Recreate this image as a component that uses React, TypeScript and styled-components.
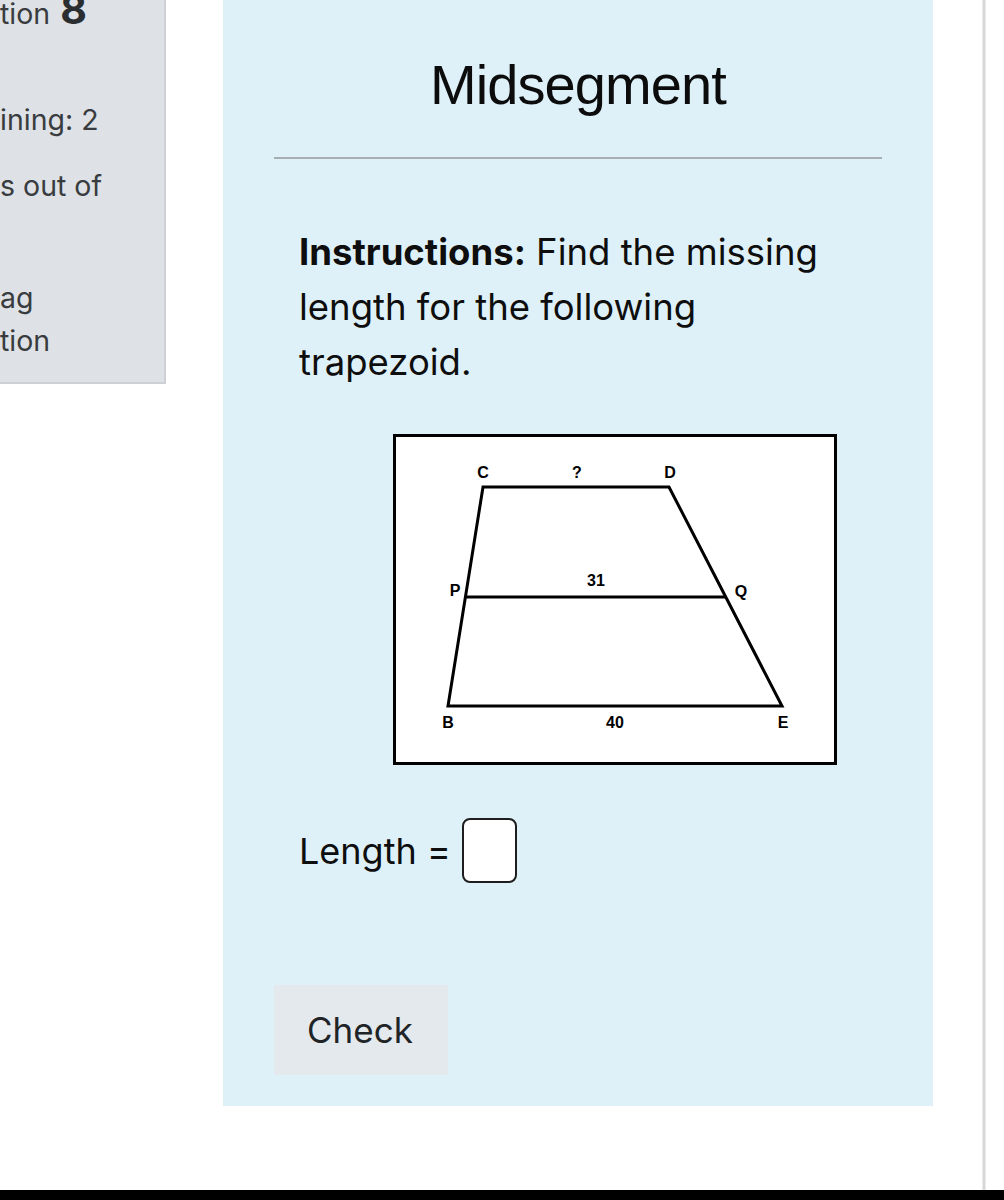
import React from "react";
import styled, { createGlobalStyle } from "styled-components";

const Global = createGlobalStyle`
  html, body { margin: 0; padding: 0; background: #ffffff; }
  body { font-family: Inter, "Noto Sans", sans-serif; }
`;

const Page = styled.div`
  width: 1004px;
  height: 1200px;
  display: flex;
  flex-direction: column;
  overflow: hidden;
`;

const Content = styled.div`
  flex: 1;
  display: flex;
  align-items: flex-start;
`;

const Footer = styled.div`
  height: 10px;
  background: #000;
`;

const Sidebar = styled.aside`
  width: 164px;
  height: 382px;
  background: #dee2e6;
  border-right: 2px solid #cdd1d5;
  border-bottom: 2px solid #cdd1d5;
  overflow: hidden;
  color: #393c3f;
  font-size: 28.5px;
  line-height: 43px;
`;

const SideLine = styled.div<{ $top: number }>`
  margin-top: ${(p) => p.$top}px;
  white-space: nowrap;
`;

const Qno = styled.span`
  font-weight: 700;
  font-size: 41px;
  margin-left: 2px;
  color: #2b2e31;
`;

const Main = styled.main`
  margin-left: 57px;
  width: 710px;
  height: 1106px;
  box-sizing: border-box;
  padding: 50px 51px 30px 51px;
  background: #def1f8;
  color: #111;
  display: flex;
  flex-direction: column;
`;

const Title = styled.h2`
  margin: 0;
  height: 70px;
  line-height: 70px;
  text-align: center;
  font-family: "Liberation Sans", Arial, sans-serif;
  font-weight: 400;
  font-size: 56px;
  letter-spacing: -0.9px;
  color: #0c0c0c;
`;

const Rule = styled.hr`
  margin: 37px 0 0 0;
  border: none;
  height: 2px;
  background: #a8afb2;
`;

const Para = styled.p`
  margin: 66px 0 0 0;
  padding-left: 25px;
  max-width: 545px;
  font-size: 36.5px;
  line-height: 55px;
  color: #0e0e0e;
`;

const Figure = styled.div`
  margin: 44px 0 0 119px;
  width: 438px;
  height: 325px;
  border: 3px solid #000;
  background: #fff;
`;

const AnswerRow = styled.div`
  margin-top: 53px;
  padding-left: 25px;
  display: flex;
  align-items: center;
  font-size: 36px;
  color: #0e0e0e;
`;

const AnswerBox = styled.input`
  margin-left: 11px;
  width: 55px;
  height: 65px;
  box-sizing: border-box;
  border: 2.5px solid #1e1e1e;
  border-radius: 8px;
  background: #fff;
  padding: 0;
  outline: none;
`;

const CheckButton = styled.button`
  margin-top: 102px;
  align-self: flex-start;
  width: 174px;
  height: 90px;
  border: none;
  background: #e4e9ed;
  color: #212427;
  font-family: Inter, "Noto Sans", sans-serif;
  font-size: 35px;
  text-align: left;
  padding: 0 0 0 33px;
`;

const Divider = styled.div`
  margin-left: 49px;
  align-self: stretch;
  width: 2px;
  background: #d6d6d6;
  border-left: 1px solid #ececec;
  border-right: 1px solid #ececec;
`;

const Trapezoid = () => (
  <svg width="438" height="325" viewBox="0 0 438 325">
    <g stroke="#000" strokeWidth="3" fill="none" strokeLinejoin="miter">
      <polygon points="87,50 273,50 386,269 52,269" />
      <line x1="70" y1="160" x2="329" y2="160" />
    </g>
    <g
      fontFamily="'Liberation Sans', Arial, sans-serif"
      fontWeight="700"
      fontSize="16"
      textAnchor="middle"
      fill="#000"
    >
      <text x="87" y="41">C</text>
      <text x="181" y="41">?</text>
      <text x="274" y="41">D</text>
      <text x="59" y="159">P</text>
      <text x="200" y="149">31</text>
      <text x="345" y="160">Q</text>
      <text x="52" y="291">B</text>
      <text x="219" y="291">40</text>
      <text x="387" y="291">E</text>
    </g>
  </svg>
);

export default function App() {
  return (
    <Page>
      <Global />
      <Content>
        <Sidebar>
          <SideLine $top={-12}>
            tion <Qno>8</Qno>
          </SideLine>
          <SideLine $top={63}>ining: 2</SideLine>
          <SideLine $top={23}>s out of</SideLine>
          <SideLine $top={69}>ag</SideLine>
          <SideLine $top={0}>tion</SideLine>
        </Sidebar>
        <Main>
          <Title>Midsegment</Title>
          <Rule />
          <Para>
            <strong>Instructions:</strong> Find the missing length for the
            following trapezoid.
          </Para>
          <Figure>
            <Trapezoid />
          </Figure>
          <AnswerRow>
            Length =
            <AnswerBox type="text" aria-label="Length" />
          </AnswerRow>
          <CheckButton>Check</CheckButton>
        </Main>
        <Divider />
      </Content>
      <Footer />
    </Page>
  );
}
